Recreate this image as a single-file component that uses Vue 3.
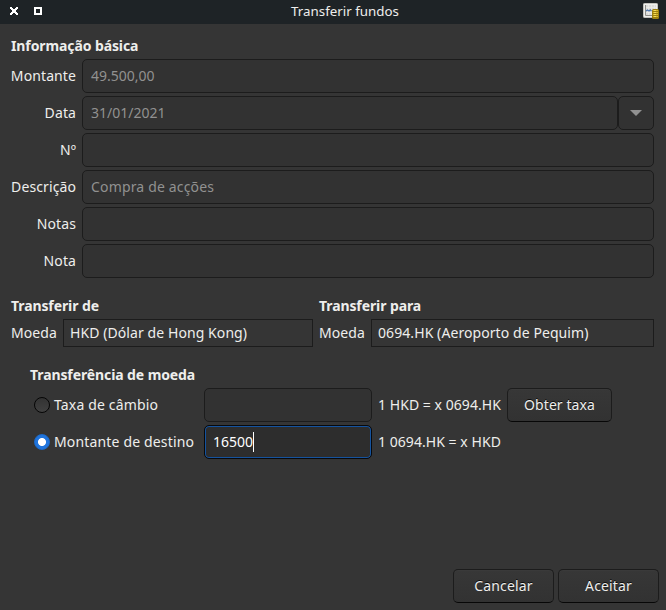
<script setup>
import { ref } from 'vue'

const fields = [
  { label: 'Montante', value: '49.500,00' },
  { label: 'Data', value: '31/01/2021', date: true },
  { label: 'Nº', value: '' },
  { label: 'Descrição', value: 'Compra de acções', text: true },
  { label: 'Notas', value: '' },
  { label: 'Nota', value: '' },
]
const mode = ref('amount')
</script>

<template>
  <div class="window">
    <header class="titlebar">
      <svg class="win-controls" width="48" height="24" viewBox="0 0 48 24" shape-rendering="crispEdges">
        <path
          fill="#fff"
          d="M10 7h2v1h1v1h2v-1h1v-1h2v2h-1v1h-1v2h1v1h1v2h-2v-1h-1v-1h-2v1h-1v1h-2v-2h1v-1h1v-2h-1v-1h-1z"
        />
        <path fill="#fff" fill-rule="evenodd" d="M34 7h8v8h-8zM36 9v4h4v-4z" />
      </svg>
      <h1>Transferir fundos</h1>
      <svg class="app-icon" width="17" height="17" viewBox="0 0 17 17">
        <rect x="0.5" y="0.5" width="14" height="14" rx="0.8" fill="#efefed" stroke="#c4c3be" />
        <rect x="2" y="2" width="11" height="10.500" fill="#dcdcd9" />
        <path d="M5.500 2v10M8.500 2v10M11.500 2v10M3 4.500h10M3 9.500h10" stroke="#ebebe9" stroke-width="0.800" />
        <path d="M2.500 2v10.500H10" fill="none" stroke="#8f8f8a" />
        <path d="M3 8l1.500-1 1.500 1 1.300-1.200L8.500 8" fill="none" stroke="#4a74ae" stroke-width="1.200" />
        <rect x="9" y="6" width="7" height="10" rx="1.500" fill="#9c8010" />
        <path d="M10 7.500h5M10 9.500h5M10 11.500h5M10 13.500h5" stroke="#dcba28" />
        <path d="M11 7.500h2M11 9.500h2M11 11.500h2M11 13.500h2" stroke="#f2dc60" />
      </svg>
    </header>

    <main>
      <section class="basic">
        <h2>Informação básica</h2>
        <div class="grid">
          <template v-for="f in fields" :key="f.label">
            <span class="label">{{ f.label }}</span>
            <div class="row">
              <div class="entry muted" :class="{ wide: f.text }">{{ f.value }}</div>
              <div v-if="f.date" class="entry drop">
                <svg width="12" height="6" viewBox="0 0 12 6"><path d="M0 0h12L6 6z" fill="#919191" /></svg>
              </div>
            </div>
          </template>
        </div>
      </section>

      <section class="accounts">
        <div class="account from">
          <h2>Transferir de</h2>
          <div class="currency"><span>Moeda</span><div class="frame">HKD (Dólar de Hong Kong)</div></div>
        </div>
        <div class="account to">
          <h2>Transferir para</h2>
          <div class="currency"><span>Moeda</span><div class="frame">0694.HK (Aeroporto de Pequim)</div></div>
        </div>
      </section>

      <section class="exchange">
        <h2>Transferência de moeda</h2>
        <div class="line">
          <div class="option" @click="mode = 'rate'">
            <i class="radio" :class="{ on: mode === 'rate' }"></i><span>Taxa de câmbio</span>
          </div>
          <div class="entry"></div>
          <span class="hint">1 HKD = x 0694.HK</span>
          <button class="fetch">Obter taxa</button>
        </div>
        <div class="line">
          <div class="option" @click="mode = 'amount'">
            <i class="radio" :class="{ on: mode === 'amount' }"></i><span>Montante de destino</span>
          </div>
          <div class="entry focused"><span>16500</span><i class="caret"></i></div>
          <span class="hint">1 0694.HK = x HKD</span>
        </div>
      </section>
    </main>

    <footer>
      <button>Cancelar</button>
      <button>Aceitar</button>
    </footer>
  </div>
</template>

<style>
body {
  margin: 0;
  background: #353535;
}
</style>

<style scoped>
.window {
  box-sizing: border-box;
  width: 666px;
  height: 610px;
  display: flex;
  flex-direction: column;
  background: #353535;
  color: #eeeeec;
  font: 14px/20px "Noto Sans", sans-serif;
  white-space: nowrap;
  overflow: hidden;
}
.window * {
  box-sizing: border-box;
}
.titlebar {
  flex: none;
  height: 24px;
  display: flex;
  align-items: flex-start;
  background: #1e2326;
}
.win-controls {
  flex: none;
}
h1 {
  flex: 1;
  margin: 0;
  padding: 2px 1px 0 0;
  text-align: center;
  font-size: 13.333px;
  font-weight: 400;
  line-height: 19px;
}
.app-icon {
  flex: none;
  margin: 3px 6px 0 0;
}
main {
  flex: 1;
  padding: 12px 12px 0 11px;
}
h2 {
  margin: 0;
  font-size: 14px;
  line-height: 20px;
  font-weight: 700;
  letter-spacing: -0.1px;
}
.grid {
  display: grid;
  grid-template-columns: 65px 572px;
  column-gap: 6px;
  row-gap: 3px;
  align-items: center;
  margin-top: 3px;
}
.label {
  justify-self: end;
  letter-spacing: 0.1px;
}
.row {
  display: flex;
}
.row .entry:first-child {
  flex: 1;
}
.entry {
  height: 34px;
  display: flex;
  align-items: center;
  padding: 0 8px;
  border: 1px solid #1c1c1c;
  border-radius: 5px;
  background: #323232;
}
.muted {
  color: #919190;
}
.wide {
  letter-spacing: 0.16px;
}
.drop {
  width: 36px;
  padding: 0;
  justify-content: center;
}
.accounts {
  display: flex;
  gap: 6px;
  margin-top: 18px;
}
.from {
  width: 302px;
}
.to {
  width: 335px;
}
.currency {
  display: flex;
  align-items: center;
  margin-top: 3px;
}
.currency span {
  width: 52px;
  letter-spacing: 0.1px;
}
.frame {
  flex: 1;
  height: 28px;
  padding: 3px 6px;
  border: 1px solid #1c1c1c;
  letter-spacing: 0.08px;
}
.exchange {
  margin: 18px 0 0 19px;
}
.line {
  display: flex;
  align-items: center;
  height: 34px;
  margin-top: 3px;
}
.option {
  width: 174px;
  display: flex;
  align-items: center;
  gap: 4px;
  padding-left: 4px;
  letter-spacing: 0.16px;
}
.radio {
  width: 16px;
  height: 16px;
  border: 1px solid #050505;
  border-radius: 50%;
  background: linear-gradient(#333, #404040);
}
.radio.on {
  border: 1px solid #1b6acb;
  background: radial-gradient(circle, #fff 3.6px, #2074dc 4.4px);
}
.line .entry {
  width: 168px;
}
.line .focused {
  border-color: #07090d;
  background: #2d2d2d;
  color: #fff;
  box-shadow: inset 0 0 0 1px #15539e;
}
.caret {
  width: 1px;
  height: 20px;
  background: #fff;
}
.hint {
  width: 129px;
  margin-left: 6px;
  letter-spacing: 0.05px;
}
button {
  width: 101px;
  height: 34px;
  padding: 0;
  border: 1px solid #1c1c1c;
  border-bottom-color: #070707;
  border-radius: 5px;
  background: linear-gradient(#373737, #323232);
  color: #eeeeec;
  font: inherit;
  letter-spacing: 0.15px;
  text-shadow: 0 -1px rgba(0, 0, 0, 0.8);
  box-shadow: inset 0 1px rgba(255, 255, 255, 0.02);
}
.fetch {
  width: 105px;
  letter-spacing: 0.08px;
}
footer {
  display: flex;
  justify-content: flex-end;
  gap: 4px;
  padding: 0 7px 7px 0;
}
</style>
